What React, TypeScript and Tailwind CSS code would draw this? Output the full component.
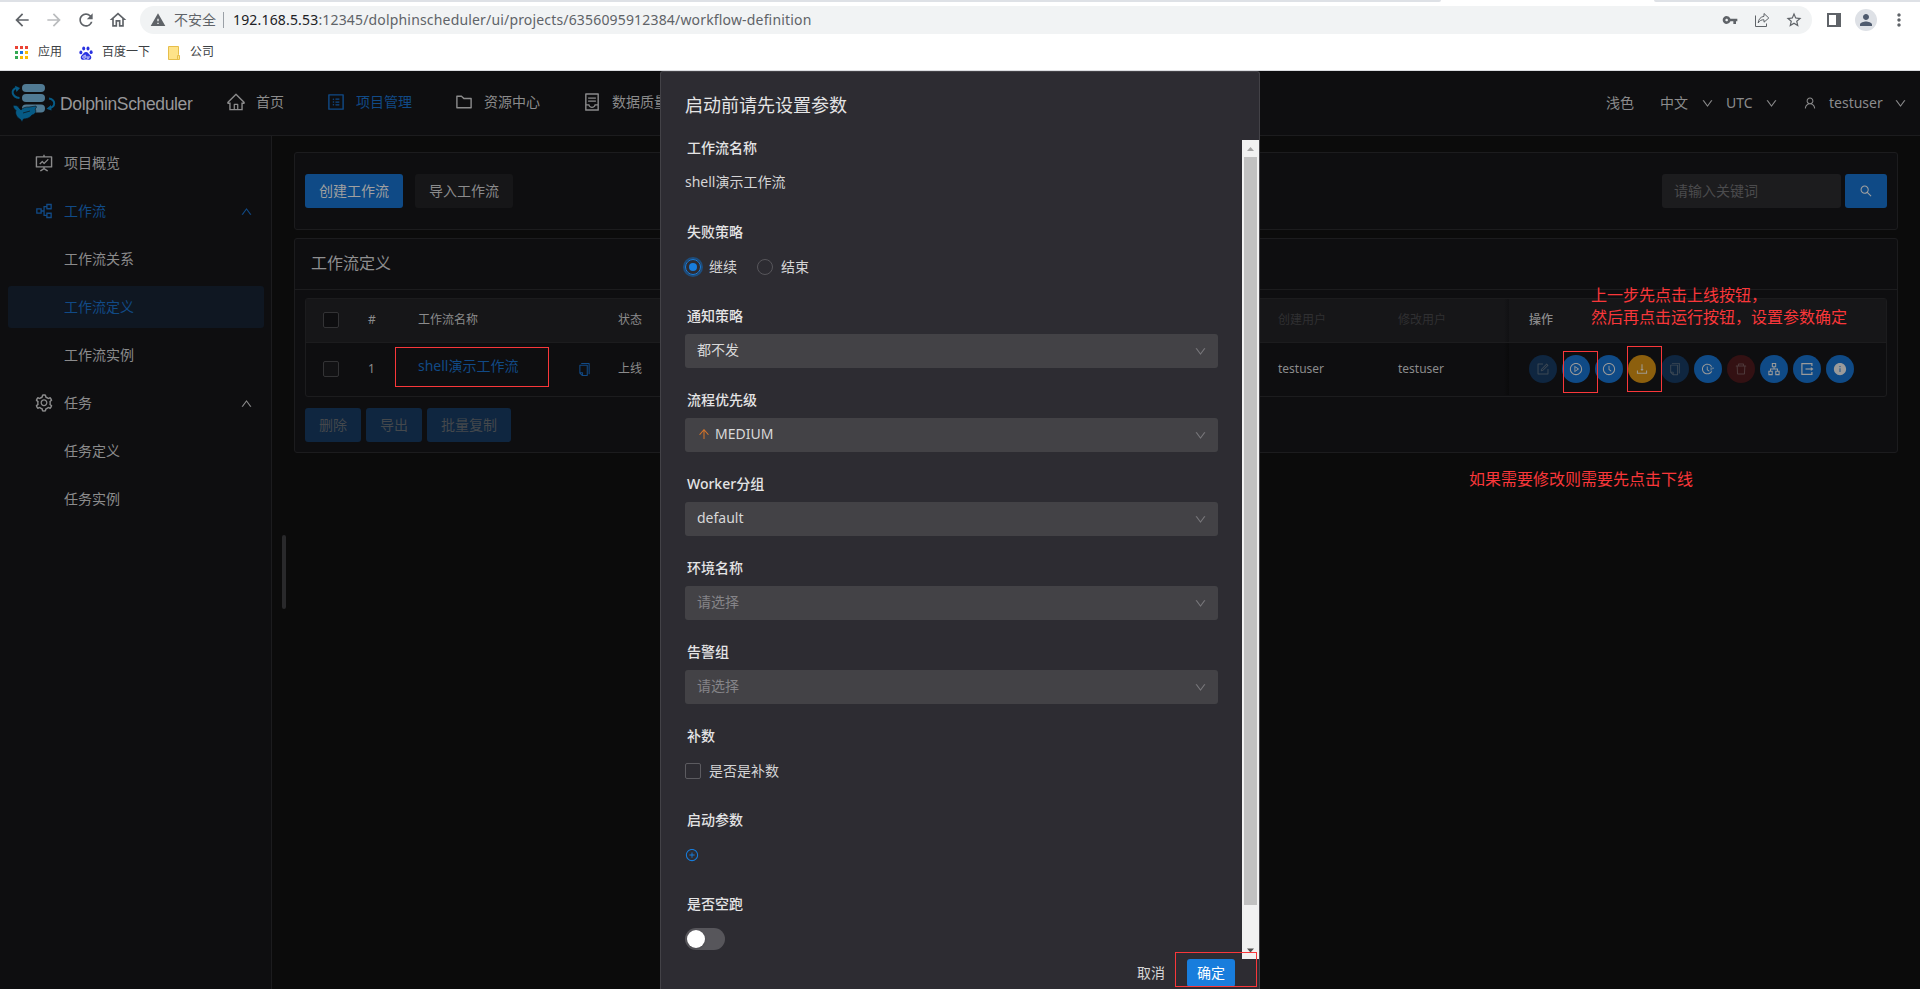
import React from "react";
import {
  AiOutlineHome,
  AiOutlineProfile,
  AiOutlineFolder,
  AiOutlineContainer,
  AiOutlineFundProjectionScreen,
  AiOutlinePartition,
  AiOutlineSetting,
  AiOutlineUser,
  AiOutlineDown,
  AiOutlineUp,
  AiOutlineSearch,
  AiOutlineCopy,
  AiOutlineForm,
  AiOutlinePlayCircle,
  AiOutlineClockCircle,
  AiOutlineDownload,
  AiOutlineFieldTime,
  AiOutlineDelete,
  AiOutlineApartment,
  AiFillInfoCircle,
  AiOutlinePlusCircle,
  AiOutlineArrowUp,
} from "react-icons/ai";
import {
  MdArrowBack,
  MdArrowForward,
  MdRefresh,
  MdOutlineHome,
  MdWarning,
  MdVpnKey,
  MdStarOutline,
  MdPerson,
  MdMoreVert,
} from "react-icons/md";

const APP_DOTS = [
  "bg-[#ea4335]", "bg-[#ea4335]", "bg-[#ea4335]",
  "bg-[#34a853]", "bg-[#1a73e8]", "bg-[#fbbc04]",
  "bg-[#34a853]", "bg-[#fbbc04]", "bg-[#fbbc04]",
];

function BrowserBar() {
  return (
    <div className="flex h-[71px] w-full flex-col border-b border-[#dadce0] bg-white">
      <div className="flex h-[2px] w-full">
        <div className="h-[2px] w-[1441px] rounded-br bg-[#dee1e6]" />
        <div className="h-[2px] w-[213px]" />
        <div className="h-[2px] flex-1 rounded-bl bg-[#dee1e6]" />
      </div>
      <div className="flex h-[36px] items-center pl-3 text-[#5f6368]">
        <MdArrowBack className="size-5" />
        <MdArrowForward className="ml-3 size-5 text-[#babcbe]" />
        <MdRefresh className="ml-3 size-5" />
        <MdOutlineHome className="ml-3 size-5" />
        <div className="ml-3 flex h-7 w-[1672px] items-center rounded-full bg-[#f1f3f4] pl-[10px]">
          <MdWarning className="size-4" />
          <span className="ml-[8px] w-[42px] pb-[2px] text-[14px] whitespace-nowrap">不安全</span>
          <span className="ml-[7px] h-4 w-px bg-[#9aa0a6]" />
          <span className="ml-[9px] pb-[2px] text-[14px] tracking-[0.17px] whitespace-nowrap">
            <span className="text-[#202124]">192.168.5.53</span>
            :12345/dolphinscheduler/ui/projects/6356095912384/workflow-definition
          </span>
          <div className="ml-auto flex items-center pr-[9px]">
            <MdVpnKey className="size-4" />
            <svg viewBox="0 0 16 16" className="ml-4 size-4" fill="none" stroke="currentColor">
              <path d="M1.5 3.5V14.5H12.5V11.5" />
              <path d="M10 1.5L14.8 6L10 10.2V7.8C7.5 7.6 5.5 8.6 4.2 11C4.3 7.5 6.5 4.8 10 4.3Z" strokeLinejoin="round" />
            </svg>
            <MdStarOutline className="ml-[15px] size-[18px]" />
          </div>
        </div>
        <svg viewBox="0 0 14 14" className="ml-[15px] size-[14px]">
          <path d="M0 0H14V14H0ZM2 2V12H9V2Z" fill="currentColor" fillRule="evenodd" />
        </svg>
        <div className="ml-[14px] flex size-[22px] items-center justify-center rounded-full bg-[#dee1e6] text-[#4f5b6e]">
          <MdPerson className="size-[18px]" />
        </div>
        <MdMoreVert className="ml-[12px] size-5" />
      </div>
      <div className="flex h-[29px] items-center pl-[15px] text-[12px] text-[#3c4043]">
        <div className="grid w-[13px] grid-cols-3 gap-[2px]">
          {APP_DOTS.map((c, i) => (
            <span key={i} className={"size-[3px] " + c} />
          ))}
        </div>
        <span className="ml-[10px] pb-px">应用</span>
        <svg viewBox="0 0 14 14" className="ml-[17px] size-[14px]" fill="#2932e1">
          <ellipse cx="1.9" cy="6.4" rx="1.5" ry="1.9" />
          <ellipse cx="4.7" cy="2.4" rx="1.5" ry="2" />
          <ellipse cx="9" cy="2.4" rx="1.5" ry="2" />
          <ellipse cx="12.1" cy="6.2" rx="1.5" ry="1.9" />
          <path d="M7 6C9 6 9.8 8 11.2 9.2C13.4 11.2 12 14 9.6 13.8C7.8 13.5 6.2 13.5 4.4 13.8C2 14 0.7 11.2 2.8 9.2C4.2 8 5 6 7 6Z" />
          <path d="M6.2 8.6V12.2H4.8A1.1 1.1 0 0 1 4.8 9.9H6.2M8 9.9V12.2H10V9.9" fill="none" stroke="#fff" strokeWidth=".8" />
        </svg>
        <span className="ml-[9px] pb-px">百度一下</span>
        <svg viewBox="0 0 12 14" className="ml-[18px] h-[14px] w-3">
          <path d="M.5 .5H10.5V8.5L11.5 9.5V13.5H.5Z" fill="#fee389" stroke="#e6be4b" />
          <path d="M9.5 13V9.5H11" fill="none" stroke="#e6be4b" />
        </svg>
        <span className="ml-[10px] pb-px">公司</span>
      </div>
    </div>
  );
}

function Logo() {
  return (
    <svg viewBox="0 0 46 40" className="h-[40px] w-[46px]">
      <g fill="#507a93">
        <rect x="11" y="1" width="23" height="8" rx="4" />
        <rect x="11" y="11" width="23" height="8" rx="4" />
        <rect x="11" y="21.500" width="23" height="8" rx="4" />
      </g>
      <g fill="none" stroke="#065a85" strokeWidth="2">
        <path d="M8.500 15C.5 14 -1 6 6.500 4.800" />
        <path d="M38 15.500C45 17 45 24 37.500 25.500" />
      </g>
      <path d="M4 2.800L9 5L5.500 9Z" fill="#065a85" />
      <path d="M40 22L35.500 25.800L40.500 27.500Z" fill="#065a85" />
      <path
        d="M2 22.500C5 22 7.500 23 8 25L10 27C12 24.500 15 23.800 18 24L25 23C26 24 25 25.500 24 26C26 28.500 24 31.500 21 32C19 35 15 36 12.500 36L11 39L9.500 36.500C5 34 4 30 5 27.500C3.500 26 2.500 25 2 22.500Z"
        fill="#065a85"
        stroke="#0e0e10"
        strokeWidth=".6"
      />
      <path d="M12 30L19 28" stroke="#0e0e10" strokeWidth=".7" />
    </svg>
  );
}

function Header() {
  return (
    <div className="flex h-[65px] w-full items-center border-b border-[#1c1c1e] bg-[#0e0e10] text-[14px] whitespace-nowrap text-[#8b8b8c]">
      <div className="flex w-[226px] items-center pl-[11px]">
        <Logo />
        <span className="mt-[3px] ml-[3px] font-['Liberation_Sans'] text-[17.5px] tracking-[-0.36px] text-[#97979a]">
          DolphinScheduler
        </span>
      </div>
      <div className="mb-[3px] flex items-center">
        <AiOutlineHome className="size-5" />
        <span className="ml-[10px] w-[70px] pb-px">首页</span>
        <AiOutlineProfile className="size-5 text-[#114a86]" />
        <span className="ml-[10px] w-[98px] pb-px text-[#114a86]">项目管理</span>
        <AiOutlineFolder className="size-5" />
        <span className="ml-[10px] w-[98px] pb-px">资源中心</span>
        <AiOutlineContainer className="size-5" />
        <span className="ml-[10px] pb-px">数据质量</span>
      </div>
      <div className="ml-auto flex items-center pr-[13px]">
        <span className="w-[54px] pb-[2px]">浅色</span>
        <span className="w-[41px] pb-[2px]">中文</span>
        <AiOutlineDown className="size-[13px]" />
        <span className="ml-[12px] w-[39px] pb-[2px]">UTC</span>
        <AiOutlineDown className="size-[13px]" />
        <AiOutlineUser className="ml-[25px] size-[14px]" />
        <span className="ml-[12px] w-[65px] pb-[2px]">testuser</span>
        <AiOutlineDown className="size-[13px]" />
      </div>
    </div>
  );
}

interface MenuEntry {
  label: string;
  icon?: React.ReactNode;
  blue?: boolean;
  selected?: boolean;
  open?: boolean;
}

const MENU: MenuEntry[] = [
  { label: "项目概览", icon: <AiOutlineFundProjectionScreen className="size-5" /> },
  { label: "工作流", icon: <AiOutlinePartition className="size-5" />, blue: true, open: true },
  { label: "工作流关系" },
  { label: "工作流定义", blue: true, selected: true },
  { label: "工作流实例" },
  { label: "任务", icon: <AiOutlineSetting className="size-5" />, open: true },
  { label: "任务定义" },
  { label: "任务实例" },
];

function Sidebar() {
  return (
    <div className="flex w-[272px] shrink-0 flex-col gap-[6px] border-r border-[#1c1c1e] bg-[#0e0e10] px-2 pt-[6px]">
      {MENU.map((m) => (
        <div
          key={m.label}
          className={
            "flex h-[42px] w-64 items-center rounded-[3px] pr-[11px] pl-[26px] text-[14px] " +
            (m.selected ? "bg-[#0f1722] " : "") +
            (m.blue ? "text-[#114a86]" : "text-[#8b8b8c]")
          }
        >
          <span className="w-[30px]">{m.icon}</span>
          <span className="flex-1 pb-[2px]">{m.label}</span>
          {m.open && <AiOutlineUp className="size-[13px]" />}
        </div>
      ))}
    </div>
  );
}

function LeaveBoxIcon({ className }: { className?: string }) {
  return (
    <svg viewBox="0 0 14 14" className={className} fill="none" stroke="currentColor" strokeWidth="1.2">
      <path d="M11.9 4V1.600H1.900V12.400H11.900V10" />
      <path d="M5.500 7H11.500" />
      <path d="M10.800 4.900L13.500 7L10.800 9.100Z" fill="currentColor" stroke="none" />
    </svg>
  );
}

const ACTIONS = [
  { Icon: AiOutlineForm, cls: "bg-[#0f2640] text-[#3c4854]" },
  { Icon: AiOutlinePlayCircle, cls: "bg-[#0f4a86] text-[#9a9a9a]" },
  { Icon: AiOutlineClockCircle, cls: "bg-[#0f4a86] text-[#9a9a9a]" },
  { Icon: AiOutlineDownload, cls: "bg-[#8c5f0d] text-[#9f9a90]" },
  { Icon: AiOutlineCopy, cls: "bg-[#0f2640] text-[#3c4854]" },
  { Icon: AiOutlineFieldTime, cls: "bg-[#0f4a86] text-[#9a9a9a]" },
  { Icon: AiOutlineDelete, cls: "bg-[#331113] text-[#4f3b3c]" },
  { Icon: AiOutlineApartment, cls: "bg-[#0f4a86] text-[#9a9a9a]" },
  { Icon: LeaveBoxIcon, cls: "bg-[#0f4a86] text-[#9a9a9a]" },
  { Icon: AiFillInfoCircle, cls: "bg-[#0f4a86] text-[#9a9a9a]" },
];

function CheckSquare({ cls }: { cls: string }) {
  return <span className={"size-4 shrink-0 rounded-[2px] border " + cls} />;
}

function TableCard() {
  return (
    <div className="mt-2 flex h-[215px] flex-col rounded-[3px] border border-[#1c1c1e] bg-[#0e0e10]">
      <div className="flex h-[51px] items-center border-b border-[#1c1c1e] pb-[2px] pl-[16px] text-[16px] text-[#8f8f90]">
        工作流定义
      </div>
      <div className="mx-[10px] mt-2 rounded-[3px] border border-[#1c1c1e] text-[12px] whitespace-nowrap text-[#8b8b8c]">
        <div className="flex h-[44px] items-center border-b border-[#1c1c1e] bg-[#161618] pb-px pl-[17px]">
          <CheckSquare cls="border-[#333335] bg-[#0e0e10]" />
          <span className="ml-[29px] w-[50px]">#</span>
          <span className="w-[200px]">工作流名称</span>
          <span className="w-[660px]">状态</span>
          <span className="w-[120px] text-[#303032]">创建用户</span>
          <span className="w-[106px] text-[#303032]">修改用户</span>
          <span className="h-[43px] w-[5px] bg-linear-to-r from-[#161618] to-[#111113]" />
          <span className="pl-[20px] font-medium">操作</span>
        </div>
        <div className="flex h-[53px] items-center pb-px pl-[17px]">
          <CheckSquare cls="border-[#333335] bg-[#121214]" />
          <span className="ml-[29px] w-[50px]">1</span>
          <span className="mb-[8px] w-[159px] text-[14px] text-[#114a86]">shell演示工作流</span>
          <AiOutlineCopy className="mr-[26px] size-[15px] text-[#114a86]" />
          <span className="w-[660px]">上线</span>
          <span className="w-[120px]">testuser</span>
          <span className="w-[106px]">testuser</span>
          <span className="h-[52px] w-[5px] bg-linear-to-r from-[#0e0e10] to-[#0a0a0b]" />
          <div className="flex items-center gap-[5px] pl-[20px]">
            {ACTIONS.map(({ Icon, cls }, i) => (
              <span key={i} className={"flex size-7 items-center justify-center rounded-full " + cls}>
                <Icon className="size-[14px]" />
              </span>
            ))}
          </div>
        </div>
      </div>
      <div className="mt-[11px] ml-[10px] flex gap-[5px] text-[14px] text-[#44484c]">
        <span className="flex h-[34px] w-14 items-center justify-center rounded-[3px] bg-[#0f2640] pb-[2px]">删除</span>
        <span className="flex h-[34px] w-14 items-center justify-center rounded-[3px] bg-[#0f2640] pb-[2px]">导出</span>
        <span className="flex h-[34px] w-[84px] items-center justify-center rounded-[3px] bg-[#0f2640] pb-[2px]">批量复制</span>
      </div>
    </div>
  );
}

function Content() {
  return (
    <div className="flex min-w-0 flex-1 bg-[#0b0b0b]">
      <div className="mt-[399px] ml-[10px] h-[74px] w-1 rounded-full bg-[#29292b]" />
      <div className="flex flex-1 flex-col pt-4 pr-[22px] pl-2">
        <div className="flex h-[78px] items-center rounded-[3px] border border-[#1c1c1e] bg-[#0e0e10] px-[10px] text-[14px]">
          <span className="flex h-[34px] w-[98px] items-center justify-center rounded-[3px] bg-[#0f4a86] pb-[2px] text-[#a0a0a0]">
            创建工作流
          </span>
          <span className="ml-3 flex h-[34px] w-[98px] items-center justify-center rounded-[3px] bg-[#161618] pb-[2px] text-[#8b8b8c]">
            导入工作流
          </span>
          <span className="ml-auto flex h-[34px] w-[179px] items-center rounded-[3px] bg-[#1c1c1e] pb-[2px] pl-3 text-[#4b4b4d]">
            请输入关键词
          </span>
          <span className="ml-1 flex h-[34px] w-[42px] items-center justify-center rounded-[3px] bg-[#0f4a86] text-[#a0a0a0]">
            <AiOutlineSearch className="size-[14px]" />
          </span>
        </div>
        <TableCard />
      </div>
    </div>
  );
}

function Field({ label, children }: { label: string; children: React.ReactNode }) {
  return (
    <div className="flex h-[84px] flex-col">
      <div className="flex h-[26px] items-center pl-[2px] font-medium text-[#e4e4e5]">{label}</div>
      <div className="mt-[6px] flex h-[34px] items-center">{children}</div>
    </div>
  );
}

function Select({ value, placeholder, icon }: { value?: string; placeholder?: string; icon?: boolean }) {
  return (
    <div className="flex h-[34px] w-full items-center rounded-[3px] bg-[#434246] pr-[11px] pb-[3px] pl-3">
      {icon && <AiOutlineArrowUp className="mr-1 size-[14px] text-[#d4742a]" />}
      <span className={"flex-1 " + (value ? "text-[#d8d8d9]" : "text-[#858488]")}>{value || placeholder}</span>
      <AiOutlineDown className="mt-[3px] size-[13px] text-[#78777b]" />
    </div>
  );
}

function Modal() {
  return (
    <div className="absolute top-[71px] left-[660px] flex h-[918px] w-[600px] flex-col rounded-t-[3px] border border-b-0 border-[#434247] bg-[#2d2c32] text-[14px] text-[#d5d5d6]">
      <div className="flex h-[68px] items-center pb-[2px] pl-6 text-[18px] text-[#e4e4e5]">启动前请先设置参数</div>
      <div className="flex h-[819px]">
        <div className="-mt-[6px] ml-6 w-[533px] shrink-0">
          <Field label="工作流名称">
            <span className="pb-[3px]">shell演示工作流</span>
          </Field>
          <Field label="失败策略">
            <span className="flex size-4 items-center justify-center rounded-full border border-[#187ddc] ring-2 ring-[#1d4d7d]">
              <span className="size-2 rounded-full bg-[#187ddc]" />
            </span>
            <span className="ml-2 pb-px">继续</span>
            <span className="ml-5 size-4 rounded-full border border-[#57565b]" />
            <span className="ml-2 pb-px">结束</span>
          </Field>
          <Field label="通知策略"><Select value="都不发" /></Field>
          <Field label="流程优先级"><Select value="MEDIUM" icon /></Field>
          <Field label="Worker分组"><Select value="default" /></Field>
          <Field label="环境名称"><Select placeholder="请选择" /></Field>
          <Field label="告警组"><Select placeholder="请选择" /></Field>
          <Field label="补数">
            <span className="size-4 rounded-[2px] border border-[#5c5b60]" />
            <span className="ml-2 pb-[2px]">是否是补数</span>
          </Field>
          <Field label="启动参数"><AiOutlinePlusCircle className="size-[14px] text-[#187ddc]" /></Field>
          <Field label="是否空跑">
            <span className="flex h-[22px] w-10 items-center rounded-full bg-[#57565b] pl-[2px]">
              <span className="size-[18px] rounded-full bg-white shadow" />
            </span>
          </Field>
        </div>
        <div className="ml-6 flex w-[17px] flex-col items-center bg-[#f1f1f1]">
          <svg viewBox="0 0 17 17" className="size-[17px]"><path d="M5 11L8.500 7L12 11Z" fill="#a3a3a3" /></svg>
          <div className="h-[748px] w-[13px] bg-[#c1c1c1]" />
          <svg viewBox="0 0 17 17" className="mt-auto size-[17px]"><path d="M5 6.500L8.500 10.500L12 6.500Z" fill="#505050" /></svg>
        </div>
      </div>
      <div className="flex h-[28px] items-center justify-end pr-6">
        <span className="pb-[2px]">取消</span>
        <span className="ml-[22px] flex h-[28px] w-12 items-center justify-center rounded-[3px] bg-[#187ddc] pb-[2px] text-white">
          确定
        </span>
      </div>
    </div>
  );
}

function Annotations() {
  return (
    <div className="pointer-events-none text-[16px] leading-[22px] whitespace-nowrap text-[#f9373a]">
      <div className="absolute top-[347px] left-[395px] h-10 w-[154px] border border-[#f9373a]" />
      <div className="absolute top-[351px] left-[1563px] h-[42px] w-[35px] border border-[#f9373a]" />
      <div className="absolute top-[346px] left-[1627px] h-[46px] w-[35px] border border-[#f9373a]" />
      <div className="absolute top-[952px] left-[1175px] h-[35px] w-[82px] border border-[#f9373a]" />
      <div className="absolute top-[284px] left-[1591px]">
        上一步先点击上线按钮，
        <br />
        然后再点击运行按钮，设置参数确定
      </div>
      <div className="absolute top-[468px] left-[1469px]">如果需要修改则需要先点击下线</div>
    </div>
  );
}

export default function App() {
  return (
    <div className="relative flex h-[989px] w-[1920px] flex-col overflow-hidden bg-[#0b0b0b] font-['Noto_Sans','Noto_Sans_CJK_SC',sans-serif]">
      <BrowserBar />
      <Header />
      <div className="flex min-h-0 flex-1">
        <Sidebar />
        <Content />
      </div>
      <Modal />
      <Annotations />
    </div>
  );
}
